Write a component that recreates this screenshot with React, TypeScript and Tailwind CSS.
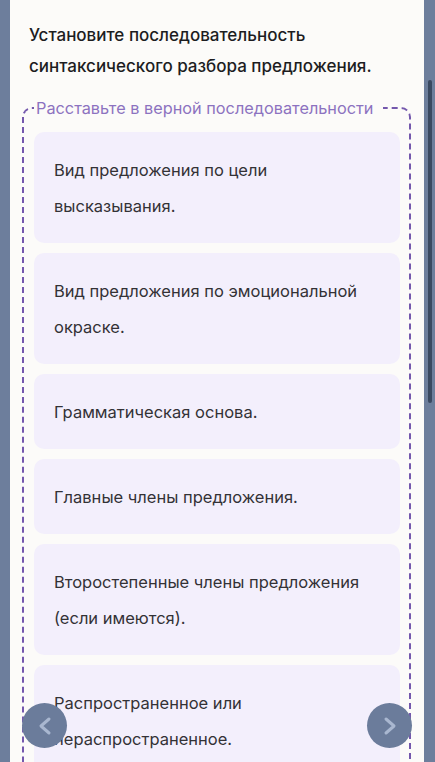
import React from 'react';

const items = [
    'Вид предложения по цели высказывания.',
    'Вид предложения по эмоциональной окраске.',
    'Грамматическая основа.',
    'Главные члены предложения.',
    'Второстепенные члены предложения (если имеются).',
    'Распространенное или нераспространенное.',
    'Осложненное или неосложненное.',
];

const Chevron = ({ dir }: { dir: 'left' | 'right' }) => (
    <svg width="16" height="20" viewBox="0 0 16 20" fill="none">
        <polyline
            points={dir === 'left' ? '12,3 4,10 12,17' : '4,3 12,10 4,17'}
            stroke="#a9b7d0"
            strokeWidth="3"
            strokeLinecap="round"
            strokeLinejoin="round"
        />
    </svg>
);

const App = () => {
    return (
        <div className="relative flex h-[762px] w-full overflow-hidden bg-[#6d7e9c]" style={{ fontFamily: 'Inter, "Noto Sans", sans-serif' }}>
            <div className="w-[10px] shrink-0" />
            <div className="flex-1 bg-[#fcfbf9] pt-[20px]">
                <h1 className="px-[19px] text-[17px] font-medium leading-[31px] text-[#1d1d1f]">
                    Установите последовательность синтаксического разбора предложения.
                </h1>
                <fieldset className="mt-[16px] ml-[12px] mr-[13px] rounded-[10px] border-[2.5px] border-dashed border-[#7458ad] pl-[10px] pr-[9px] pt-[14px] pb-4">
                    <legend className="pl-[2px] pr-[9px] text-[16.3px] leading-[20px] text-[#8c72c0]">
                        Расставьте в верной последовательности
                    </legend>
                    <div className="flex flex-col gap-[10px]">
                        {items.map((t) => (
                            <div key={t} className="rounded-[10px] bg-[#f3effc] py-[19.5px] pl-[20px] pr-4 text-[16.5px] leading-[36px] text-[#333236]">
                                {t}
                            </div>
                        ))}
                    </div>
                </fieldset>
            </div>
            <div className="w-[11px] shrink-0 pl-[4px] pt-[80px]">
                <div className="h-[323px] w-[4px] rounded-full bg-[#3a4961]" />
            </div>

            <button className="absolute left-[22px] top-[703px] flex h-[45px] w-[45px] items-center justify-center rounded-full bg-[#6b7c9b]">
                <Chevron dir="left" />
            </button>
            <button className="absolute right-[23px] top-[703px] flex h-[45px] w-[45px] items-center justify-center rounded-full bg-[#6b7c9b]">
                <Chevron dir="right" />
            </button>
        </div>
    );
};

export default App;
